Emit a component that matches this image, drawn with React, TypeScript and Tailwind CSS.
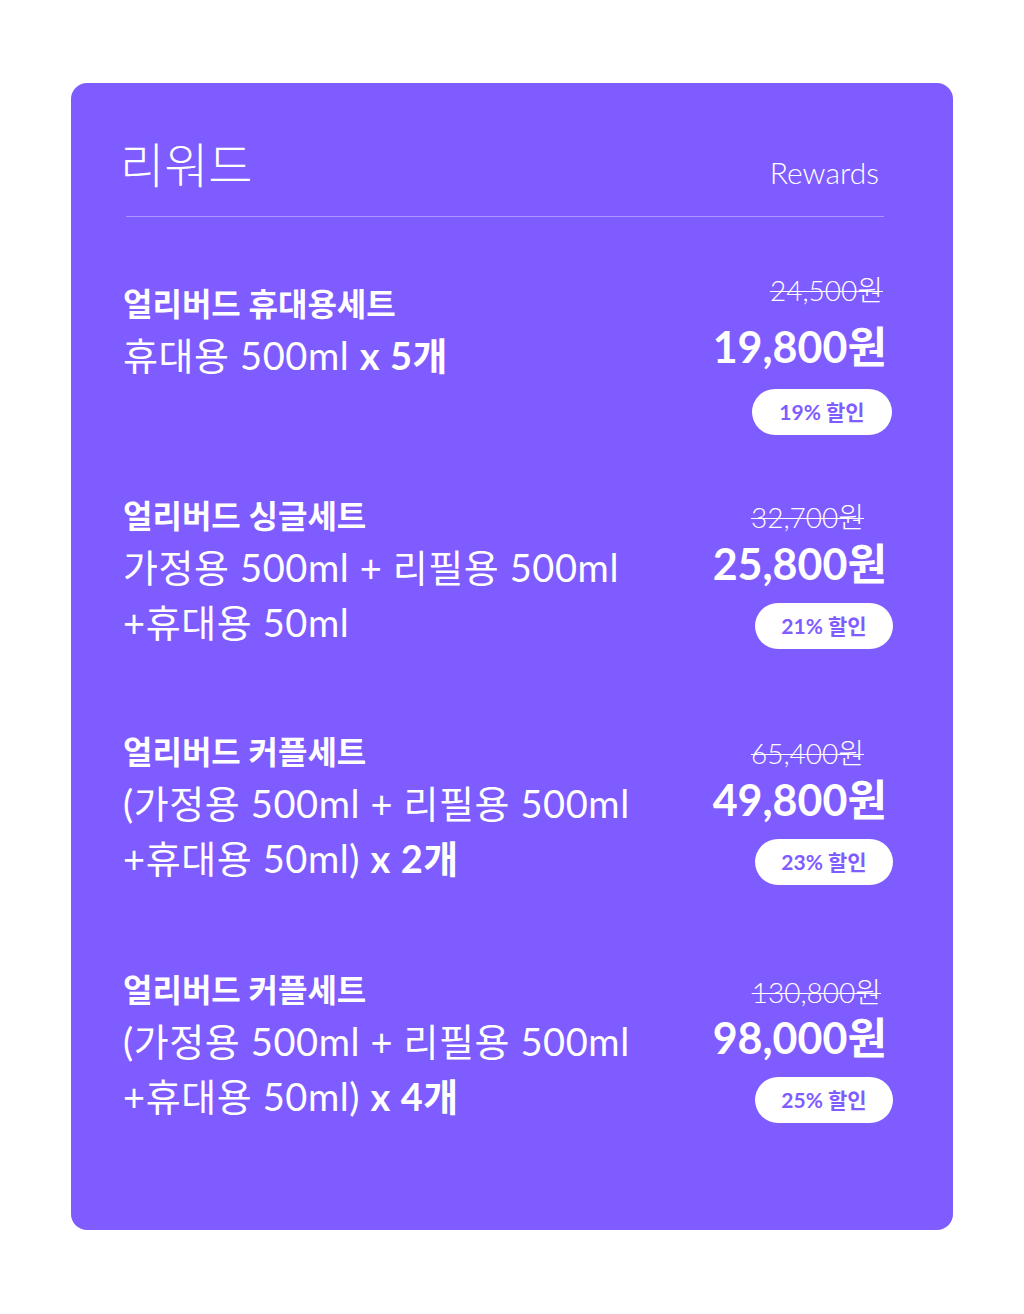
import React from 'react';

type Item = {
  title: string;
  body: React.ReactNode;
  orig: string;
  price: string;
  pct: string;
  itemClass: string;
  rightClass: string;
  origClass: string;
  priceClass: string;
  pillClass: string;
};

const items: Item[] = [
  {
    title: '얼리버드 휴대용세트',
    body: (
      <>
        <div>
          휴대용 500ml <span className="font-bold">x 5개</span>
        </div>
      </>
    ),
    orig: '24,500원',
    price: '19,800원',
    pct: '19% 할인',
    itemClass: 'mt-[63px]',
    rightClass: 'mt-[-6px]',
    origClass: 'mr-[2px]',
    priceClass: 'mt-[16px]',
    pillClass: 'mt-[17px] w-[140px] mr-[-7px]',
  },
  {
    title: '얼리버드 싱글세트',
    body: (
      <>
        <div>가정용 500ml + 리필용 500ml</div>
        <div>+휴대용 50ml</div>
      </>
    ),
    orig: '32,700원',
    price: '25,800원',
    pct: '21% 할인',
    itemClass: 'mt-[57px]',
    rightClass: 'pt-[9px]',
    origClass: 'mr-[21px]',
    priceClass: 'mt-[6px]',
    pillClass: 'mt-[14px] w-[138px] mr-[-8px]',
  },
  {
    title: '얼리버드 커플세트',
    body: (
      <>
        <div>(가정용 500ml + 리필용 500ml</div>
        <div>
          +휴대용 50ml) <span className="font-bold">x 2개</span>
        </div>
      </>
    ),
    orig: '65,400원',
    price: '49,800원',
    pct: '23% 할인',
    itemClass: 'mt-[78px]',
    rightClass: 'pt-[9px]',
    origClass: 'mr-[21px]',
    priceClass: 'mt-[6px]',
    pillClass: 'mt-[14px] w-[138px] mr-[-8px]',
  },
  {
    title: '얼리버드 커플세트',
    body: (
      <>
        <div>(가정용 500ml + 리필용 500ml</div>
        <div>
          +휴대용 50ml) <span className="font-bold">x 4개</span>
        </div>
      </>
    ),
    orig: '130,800원',
    price: '98,000원',
    pct: '25% 할인',
    itemClass: 'mt-[80px]',
    rightClass: 'pt-[10px]',
    origClass: 'mr-[4px]',
    priceClass: 'mt-[5px]',
    pillClass: 'mt-[14px] w-[138px] mr-[-8px]',
  },
];

export default function App() {
  return (
    <div className="min-h-[1314px] bg-white pt-[83px] font-['Lato','Noto_Sans_CJK_KR',sans-serif] text-white">
      <div className="mx-auto h-[1147px] w-[882px] rounded-[16px] bg-[#7f5cff] pl-[52px] pr-[68px] pt-[58px]">
        <div className="flex items-end justify-between">
          <div className="ml-[-3px] text-[48px] font-light leading-[48px]">리워드</div>
          <div className="mr-[6px] text-[30px] font-light leading-[34px]">Rewards</div>
        </div>
        <div className="ml-[3px] mr-[1px] mt-[27px] h-px bg-white/35" />
        {items.map((it, i) => (
          <div key={i} className={`flex items-start justify-between ${it.itemClass}`}>
            <div>
              <div className="text-[32px] font-bold leading-[48px]">{it.title}</div>
              <div className="text-[38px] font-normal leading-[55px] tracking-[0.6px]">{it.body}</div>
            </div>
            <div className={`flex flex-col items-end ${it.rightClass}`}>
              <div className={`text-[28px] font-light leading-[32px] line-through decoration-1 ${it.origClass}`}>
                {it.orig}
              </div>
              <div className={`mr-[-2px] text-[43px] font-bold leading-[50px] ${it.priceClass}`}>{it.price}</div>
              <div
                className={`flex h-[46px] items-center justify-center rounded-full bg-white text-[21px] font-bold text-[#7f5cff] ${it.pillClass}`}
              >
                {it.pct}
              </div>
            </div>
          </div>
        ))}
      </div>
    </div>
  );
}
